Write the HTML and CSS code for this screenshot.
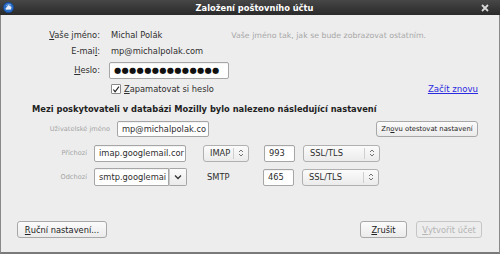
FILE: index.html
```html
<!DOCTYPE html>
<html lang="cs">
<head>
<meta charset="utf-8">
<title>Založení poštovního účtu</title>
<link rel="stylesheet" href="styles.css">
</head>
<body>
<div class="win">
  <div class="titlebar">
    <svg class="appicon" width="11" height="11" viewBox="0 0 11 11"><circle cx="5.5" cy="5.5" r="5.2" fill="#2a6bc4"/><circle cx="5.5" cy="5.5" r="5.2" fill="none" stroke="#0e3f86" stroke-width="0.6"/><path d="M2.5 6.5 L5.5 3 L8.5 5 L8 7.5 L3 7.8 Z" fill="#e8eef8"/><path d="M3 4 Q5 1.5 8 3" stroke="#9cc4f0" stroke-width="0.8" fill="none"/></svg>
    <span class="title">Založení poštovního účtu</span>
    <svg class="close" width="8" height="8" viewBox="0 0 8 8"><path d="M1 1 L7 7 M7 1 L1 7" stroke="#d8d8d8" stroke-width="1.8"/></svg>
  </div>
  <div class="body">
    <div class="identity">
      <span class="lbl"><u>V</u>aše jméno:</span>
      <div class="val">Michal Polák<span class="hint">Vaše jméno tak, jak se bude zobrazovat ostatním.</span></div>
      <span class="lbl">E-mai<u>l</u>:</span>
      <div class="val">mp@michalpolak.com</div>
      <span class="lbl"><u>H</u>eslo:</span>
      <div class="val"><span class="input pw">●●●●●●●●●●●●●●</span></div>
      <span></span>
      <div class="val checkrow">
        <span class="check"><svg width="9" height="9" viewBox="0 0 9 9"><path d="M1.5 4.5 L3.5 7 L7.8 1.2" stroke="#222" stroke-width="1.3" fill="none"/></svg></span>
        <span><u>Z</u>apamatovat si heslo</span>
        <a class="link">Začít znovu</a>
      </div>
    </div>

    <div class="heading">Mezi poskytovateli v databázi Mozilly bylo nalezeno následující nastavení</div>

    <div class="row userrow">
      <span class="slbl wide">Uživatelské jméno</span>
      <span class="input user">mp@michalpolak.co</span>
      <span class="btn small">Zn<u>o</u>vu otestovat nastavení</span>
    </div>
    <div class="row">
      <span class="slbl">Příchozí</span>
      <span class="input host">imap.googlemail.cor</span>
      <span class="select proto">IMAP<span class="sep"></span><svg width="6" height="8" viewBox="0 0 6 8"><path d="M1 3 L3 1 L5 3 M1 5 L3 7 L5 5" stroke="#666" fill="none" stroke-width="0.9"/></svg></span>
      <span class="input port">993</span>
      <span class="select ssl">SSL/TLS<span class="sep"></span><svg width="6" height="8" viewBox="0 0 6 8"><path d="M1 3 L3 1 L5 3 M1 5 L3 7 L5 5" stroke="#666" fill="none" stroke-width="0.9"/></svg></span>
    </div>
    <div class="row">
      <span class="slbl">Odchozí</span>
      <span class="combo"><span class="input cin">smtp.googlemai</span><span class="cbtn"><svg width="8" height="6" viewBox="0 0 8 6"><path d="M1 1.5 L4 4.5 L7 1.5" stroke="#333" fill="none" stroke-width="1.3"/></svg></span></span>
      <span class="smtp">SMTP</span>
      <span class="input port">465</span>
      <span class="select ssl">SSL/TLS<span class="sep"></span><svg width="6" height="8" viewBox="0 0 6 8"><path d="M1 3 L3 1 L5 3 M1 5 L3 7 L5 5" stroke="#666" fill="none" stroke-width="0.9"/></svg></span>
    </div>

    <div class="footer">
      <span class="btn manual"><u>R</u>uční nastavení...</span>
      <span class="btn cancel"><u>Z</u>rušit</span>
      <span class="btn create disabled"><u>V</u>ytvořit účet</span>
    </div>
  </div>
</div>
</body>
</html>
```

FILE: styles.css
```css
* { box-sizing: border-box; }
html, body { margin: 0; padding: 0; }
body {
  width: 500px; height: 254px; overflow: hidden;
  font-family: "DejaVu Sans", sans-serif;
  font-size: 8.3px;
  color: #2e2e2e;
  background: #ededed;
}
u { text-decoration: underline; text-underline-offset: 1px; }
.win {
  width: 500px; height: 254px;
  background: #ededed;
  border-left: 1px solid #8a8a8a;
  border-right: 1px solid #8a8a8a;
  border-bottom: 2px solid #7a7a7a;
  display: flex; flex-direction: column;
}
.titlebar {
  height: 15px;
  background: linear-gradient(#474747, #2a2a2a);
  display: flex; align-items: center;
  padding: 0 11px 0 3px;
  color: #fff;
  margin: 0 -1px;
}
.appicon { flex: none; }
.title {
  flex: 1; text-align: center;
  font-weight: bold; font-size: 8.3px;
  padding-left: 14px;
}
.close { flex: none; }
.body { flex: 1; display: flex; flex-direction: column; }

.identity {
  display: grid;
  grid-template-columns: 99px 1fr;
  column-gap: 11px;
  grid-template-rows: 16px 16px 22px 16px;
  margin-top: 12px;
  align-items: center;
}
.lbl { text-align: right; color: #2e2e2e; }
.val { display: flex; align-items: center; }
.hint { color: #a8a8a8; margin-left: 69px; font-size: 7.8px; }
.input {
  display: inline-flex; align-items: center;
  background: #fff;
  border: 1px solid #a6a6a6;
  border-radius: 2px;
  height: 17px;
  padding: 0 5px;
  white-space: nowrap; overflow: hidden;
  box-shadow: inset 0 1px 1px rgba(0,0,0,0.06);
}
.pw { width: 120px; margin-left: -2px; font-size: 8.3px; letter-spacing: 0.3px; padding: 0 4px; color: #111; }
.check {
  width: 10px; height: 10px;
  border: 1px solid #8a8a8a; border-radius: 1px;
  background: #fff;
  display: inline-flex; align-items: center; justify-content: center;
  margin-right: 3px;
}
.link { margin-left: auto; margin-right: 21px; color: #2a2ae0; text-decoration: underline; font-size: 8.6px; }

.heading {
  font-weight: bold;
  margin: 7px 0 0 31px;
  font-size: 8.3px;
  color: #222;
}
.row {
  display: flex; align-items: center;
  height: 24px;
  padding-right: 21px;
}
.userrow { margin-top: 3px; }
.slbl {
  width: 86px; text-align: right;
  color: #a4a4a4; font-size: 6.6px;
  margin-right: 7px;
}
.slbl.wide { width: 109px; }
.user { width: 92px; height: 16px; padding: 0 4px; }
.host { width: 92px; padding: 0 4px; }
.btn {
  display: inline-flex; align-items: center; justify-content: center;
  height: 17px;
  border: 1px solid #a8a8a8;
  border-radius: 3px;
  background: linear-gradient(#fbfbfb, #ebebeb);
  white-space: nowrap;
  color: #222;
}
.btn.small { margin-left: auto; width: 102px; font-size: 6.8px; height: 16px; }
.select {
  display: inline-flex; align-items: center;
  height: 17px;
  border: 1px solid #b0b0b0;
  border-radius: 3px;
  background: linear-gradient(#fbfbfb, #ebebeb);
  padding: 0 4px 0 6px;
}
.select .sep { width: 1px; height: 11px; background: #cfcfcf; margin-left: auto; margin-right: 4px; }
.proto { width: 46px; margin-left: 17px; }
.port { width: 31px; margin-left: 15px; padding: 0 4px; }
.ssl { width: 77px; margin-left: 8px; }
.combo { display: inline-flex; width: 93px; height: 18px; }
.cin { width: 75px; height: 18px; border-radius: 2px 0 0 2px; padding: 0 4px; }
.cbtn {
  width: 18px; height: 18px;
  border: 1px solid #a6a6a6; border-left: 1px solid #c8c8c8;
  border-radius: 0 2px 2px 0;
  background: linear-gradient(#fbfbfb, #ebebeb);
  display: inline-flex; align-items: center; justify-content: center;
}
.smtp { margin-left: 20px; width: 41px; }
.footer {
  display: flex; align-items: center;
  margin-top: auto; margin-bottom: 14px;
  padding: 0 17px 0 16px;
}
.manual { width: 90px; }
.cancel { margin-left: auto; width: 47px; }
.create { width: 66px; margin-left: 9px; }
.disabled { color: #b4b4b4; border-color: #c6c6c6; background: #ededed; }
```
